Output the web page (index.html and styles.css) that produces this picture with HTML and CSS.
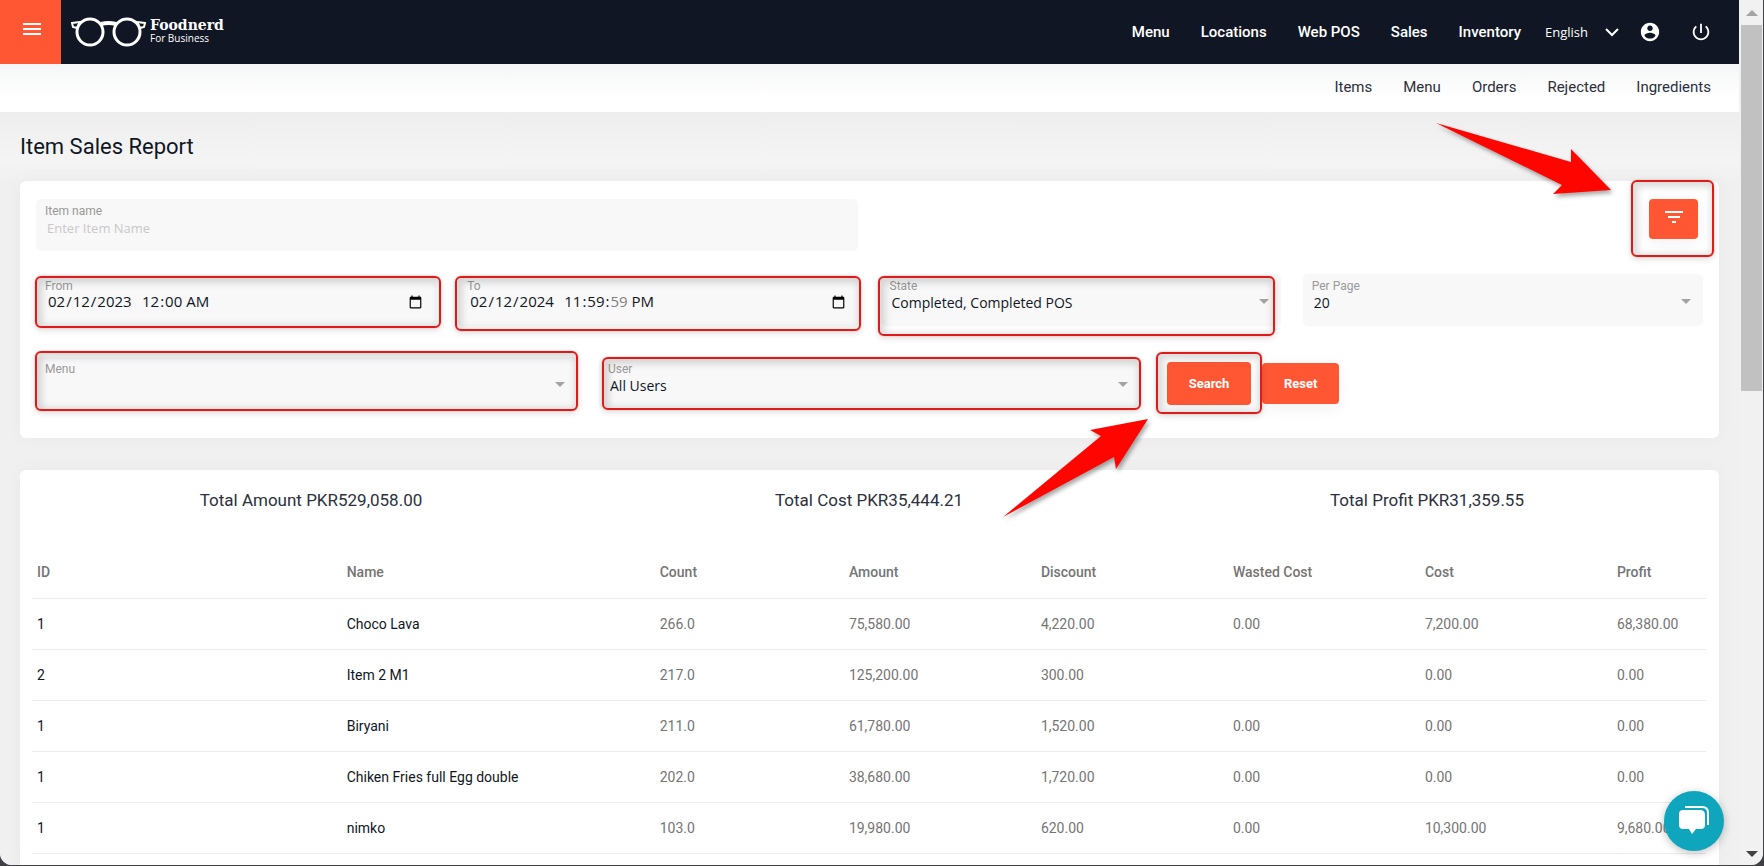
FILE: index.html
```html
<!DOCTYPE html>
<html lang="en">
<head>
    <meta charset="UTF-8">
    <meta name="viewport" content="width=device-width, initial-scale=1.0">
    <title>Item Sales Report</title>
    <link rel="stylesheet" href="styles.css">
</head>
<body>
    <div class="window">
        <div class="page">
            <header class="topbar">
                <button type="button" class="menu-toggle" aria-label="Toggle menu">
                    <svg width="20" height="14" viewBox="0 0 20 14"><path d="M1 2h18M1 7h18M1 12h18" stroke="#fff" stroke-width="2"/></svg>
                </button>
                <a href="#" class="logo">
                    <svg width="76" height="30" viewBox="0 0 76 30" fill="none" stroke="#fff">
                        <circle cx="19" cy="15" r="13" stroke-width="3"/>
                        <circle cx="56" cy="15" r="13" stroke-width="3"/>
                        <path d="M30 7c4-1 11-1 15 0" stroke-width="4"/>
                        <path d="M1 6l8-1-3 6-4-1zM74 6l-8-1 3 6 4-1z" stroke-width="2"/>
                    </svg>
                    <span class="logo-text">
                        <span class="logo-name">Foodnerd</span>
                        <span class="logo-sub">For Business</span>
                    </span>
                </a>
                <nav class="main-nav">
                    <a href="#">Menu</a>
                    <a href="#">Locations</a>
                    <a href="#">Web POS</a>
                    <a href="#">Sales</a>
                    <a href="#">Inventory</a>
                </nav>
                <div class="language">
                    <select aria-label="Language">
                        <option>English</option>
                    </select>
                    <svg width="14" height="9" viewBox="0 0 14 9"><path d="M1 1l6 6 6-6" fill="none" stroke="#fff" stroke-width="2"/></svg>
                </div>
                <a href="#" class="icon-link" aria-label="Account">
                    <svg width="22" height="22" viewBox="0 0 24 24" fill="#fff"><path d="M12 2C6.480 2 2 6.480 2 12s4.480 10 10 10 10-4.480 10-10S17.520 2 12 2zm0 3c1.660 0 3 1.340 3 3s-1.340 3-3 3-3-1.340-3-3 1.340-3 3-3zm0 14.200c-2.500 0-4.710-1.280-6-3.220.03-1.990 4-3.080 6-3.080 1.990 0 5.970 1.090 6 3.080-1.290 1.940-3.500 3.220-6 3.220z"/></svg>
                </a>
                <a href="#" class="icon-link" aria-label="Log out">
                    <svg width="22" height="22" viewBox="0 0 24 24" fill="#fff"><path d="M13 3h-2v10h2V3zm4.830 2.170l-1.420 1.420C17.990 7.860 19 9.810 19 12c0 3.870-3.130 7-7 7s-7-3.130-7-7c0-2.190 1.010-4.140 2.580-5.420L6.170 5.170C4.230 6.820 3 9.260 3 12c0 4.970 4.030 9 9 9s9-4.030 9-9c0-2.740-1.230-5.180-3.170-6.830z"/></svg>
                </a>
            </header>

            <nav class="sub-nav">
                <a href="#">Items</a>
                <a href="#">Menu</a>
                <a href="#">Orders</a>
                <a href="#">Rejected</a>
                <a href="#">Ingredients</a>
            </nav>

            <main class="content">
                <h1>Item Sales Report</h1>

                <form class="card filters">
                    <div class="row row-name">
                        <div class="field">
                            <label for="itemName">Item name</label>
                            <input type="text" id="itemName" placeholder="Enter Item Name">
                        </div>
                        <div class="marked filter-toggle">
                            <button type="button" class="btn btn-icon" aria-label="Filters">
                                <svg width="18" height="12" viewBox="0 0 18 12" fill="#fff"><path d="M0 0h18v2H0zM3 5h12v2H3zM7 10h4v2H7z"/></svg>
                            </button>
                            <span class="mark mark-filter"></span>
                            <svg class="arrow arrow-filter" width="176" height="72" viewBox="0 0 176 72"><path d="M0 0L135 39V26L175 67 117 71 126 62z"/></svg>
                        </div>
                    </div>

                    <div class="row row-dates">
                        <div class="field">
                            <label for="fromDate">From</label>
                            <div class="datetime">
                                <input type="date" id="fromDate" value="2023-02-12">
                                <input type="time" value="00:00" aria-label="From time">
                            </div>
                            <span class="mark mark-from"></span>
                        </div>
                        <div class="field">
                            <label for="toDate">To</label>
                            <div class="datetime">
                                <input type="date" id="toDate" value="2024-02-12">
                                <input type="time" value="23:59:59" aria-label="To time">
                            </div>
                            <span class="mark mark-to"></span>
                        </div>
                        <div class="field select">
                            <label for="state">State</label>
                            <select id="state">
                                <option>Completed, Completed POS</option>
                            </select>
                            <span class="mark mark-state"></span>
                        </div>
                        <div class="field select">
                            <label for="perPage">Per Page</label>
                            <select id="perPage">
                                <option>20</option>
                            </select>
                        </div>
                    </div>

                    <div class="row row-users">
                        <div class="field select">
                            <label for="menu">Menu</label>
                            <select id="menu">
                                <option></option>
                            </select>
                            <span class="mark mark-menu"></span>
                        </div>
                        <div class="field select">
                            <label for="user">User</label>
                            <select id="user">
                                <option>All Users</option>
                            </select>
                            <span class="mark mark-user"></span>
                        </div>
                        <div class="actions">
                            <div class="marked">
                                <button type="button" class="btn btn-search">Search</button>
                                <span class="mark mark-search"></span>
                                <svg class="arrow arrow-search" width="146" height="98" viewBox="0 0 146 98"><path d="M0 98L98 17 87 11 145 0 113 50 111 38z"/></svg>
                            </div>
                            <button type="reset" class="btn">Reset</button>
                        </div>
                    </div>
                </form>

                <section class="card report">
                    <div class="totals">
                        <p>Total Amount PKR529,058.00</p>
                        <p>Total Cost PKR35,444.21</p>
                        <p>Total Profit PKR31,359.55</p>
                    </div>
                    <table>
                        <colgroup>
                            <col class="col-id">
                            <col class="col-name">
                            <col class="col-count">
                            <col class="col-money">
                            <col class="col-money">
                            <col class="col-money">
                            <col class="col-money">
                            <col>
                        </colgroup>
                        <thead>
                            <tr><th>ID</th><th>Name</th><th>Count</th><th>Amount</th><th>Discount</th><th>Wasted Cost</th><th>Cost</th><th>Profit</th></tr>
                        </thead>
                        <tbody>
                            <tr><td>1</td><td>Choco Lava</td><td>266.0</td><td>75,580.00</td><td>4,220.00</td><td>0.00</td><td>7,200.00</td><td>68,380.00</td></tr>
                            <tr><td>2</td><td>Item 2 M1</td><td>217.0</td><td>125,200.00</td><td>300.00</td><td></td><td>0.00</td><td>0.00</td></tr>
                            <tr><td>1</td><td>Biryani</td><td>211.0</td><td>61,780.00</td><td>1,520.00</td><td>0.00</td><td>0.00</td><td>0.00</td></tr>
                            <tr><td>1</td><td>Chiken Fries full Egg double</td><td>202.0</td><td>38,680.00</td><td>1,720.00</td><td>0.00</td><td>0.00</td><td>0.00</td></tr>
                            <tr><td>1</td><td>nimko</td><td>103.0</td><td>19,980.00</td><td>620.00</td><td>0.00</td><td>10,300.00</td><td>9,680.00</td></tr>
                        </tbody>
                    </table>
                </section>
            </main>
        </div>

        <div class="scrollbar">
            <span class="scroll-up"></span>
            <span class="scroll-thumb"></span>
            <span class="scroll-down"></span>
        </div>

        <button type="button" class="chat" aria-label="Open chat">
            <svg width="32" height="32" viewBox="0 0 32 32">
                <path d="M7 2h17q6 0 6 6v12" fill="none" stroke="#fff" stroke-width="2"/>
                <path d="M5 5h17q5 0 5 5v10q0 4-4 4h-5l-4 5-3-5H5q-4 0-4-4V9q0-4 4-4z" fill="#fff"/>
            </svg>
        </button>
    </div>
</body>
</html>
```
FILE: styles.css
```css
* {
    box-sizing: border-box;
}
body {
    margin: 0;
    background-color: #3f4045;
    color: #101624;
    font-family: Roboto, "Liberation Sans", sans-serif;
}
a {
    color: inherit;
    text-decoration: none;
}
button {
    border: none;
    cursor: pointer;
}
.window {
    position: relative;
    display: flex;
    height: calc(100vh - 1px);
    margin-right: 1px;
    overflow: hidden;
    background-color: #f0f0f0;
    border-radius: 0 0 12px 12px;
}
.page {
    flex: 1;
    display: flex;
    flex-direction: column;
    min-width: 0;
}

/* header */
.topbar {
    display: flex;
    align-items: center;
    height: 64px;
    padding-right: 27px;
    flex-shrink: 0;
    background-color: #101624;
    color: #fff;
}
.menu-toggle {
    display: flex;
    justify-content: center;
    align-items: center;
    width: 61px;
    height: 64px;
    padding: 0 0 6px 2px;
    background-color: #ff5733;
}
.logo {
    display: flex;
    align-items: center;
    gap: 3px;
    margin-left: 10px;
    margin-right: auto;
}
.logo-text {
    display: flex;
    flex-direction: column;
    padding-bottom: 2px;
}
.logo-name {
    font: bold 14px/14px "DejaVu Serif", serif;
}
.logo-sub {
    font: 10px/12px "Open Sans", sans-serif;
}
.main-nav {
    display: flex;
    gap: 31px;
    font-size: 15px;
    font-weight: 500;
}
.language {
    display: flex;
    align-items: center;
    margin-left: 24px;
}
.language select {
    width: 60px;
    padding: 0;
    appearance: none;
    border: none;
    background: none;
    color: #fff;
    font: 13px "Open Sans", sans-serif;
}
.icon-link {
    display: flex;
    margin-left: 20px;
}
.icon-link + .icon-link {
    margin-left: 29px;
}
.sub-nav {
    display: flex;
    justify-content: flex-end;
    align-items: center;
    gap: 31px;
    height: 48px;
    padding: 0 28px 2px 0;
    flex-shrink: 0;
    background: linear-gradient(#f5f6f7, #fff 70%);
    color: #2b303c;
    font-size: 15px;
}

/* content */
.content {
    flex: 1;
    display: flex;
    flex-direction: column;
    padding: 21px 20px 0;
    background: linear-gradient(#eeeeee, #f4f4f4 48px, #f0f0f0 70px);
}
h1 {
    margin: 0 0 20px;
    font-size: 22px;
    line-height: 28px;
    font-weight: 400;
}
.card {
    background-color: #fff;
    border-radius: 6px;
    box-shadow: 0 0 20px rgba(0, 0, 0, 0.03);
}
.filters {
    padding: 18px 16px 29px;
    margin-bottom: 32px;
}
.row {
    display: grid;
    column-gap: 22px;
}
.row-name {
    grid-template-columns: 822px 1fr;
    margin-bottom: 23px;
}
.row-dates {
    grid-template-columns: repeat(4, 1fr);
    margin-bottom: 31px;
}
.row-users {
    grid-template-columns: repeat(3, 1fr);
}
.field {
    position: relative;
    display: flex;
    flex-direction: column;
    height: 52px;
    padding: 6px 9px 0;
    background-color: #f8f8f8;
    border-radius: 5px;
}
.field label {
    color: #999;
    font-size: 12px;
    line-height: 13px;
}
.field input,
.field select {
    height: 20px;
    padding: 0 2px;
    appearance: none;
    border: none;
    outline: none;
    background: none;
    color: #101624;
    font: 14px/20px "Open Sans", sans-serif;
}
.field input[type="text"] {
    font-size: 13px;
}
.field input::placeholder {
    color: #c8c8c8;
}
.datetime {
    position: relative;
    display: flex;
    align-items: center;
    height: 16px;
}
.field .datetime input {
    font-size: 15px;
}
.datetime input[type="date"] {
    width: 94px;
}

.datetime input[type="date"]::-webkit-calendar-picker-indicator {
    position: absolute;
    top: 0;
    right: 2px;
    margin: 0;
}
.datetime input[type="time"]::-webkit-calendar-picker-indicator {
    display: none;
}
.select::after {
    content: "";
    position: absolute;
    top: 25px;
    right: 12px;
    border: 5px solid transparent;
    border-top-color: #a3a3a3;
    border-bottom: none;
}

/* buttons */
.btn {
    height: 41px;
    padding: 0 22px;
    background-color: #ff5733;
    border-radius: 4px;
    box-shadow: 0 4px 16px rgba(0, 0, 0, 0.06);
    color: #fff;
    font: bold 13px Roboto, sans-serif;
}
.btn-search {
    height: 43px;
    width: 84px;
    padding: 0;
}
.btn-icon {
    display: flex;
    justify-content: center;
    align-items: center;
    width: 49px;
    height: 40px;
    padding: 0 0 4px;
}
.actions {
    display: flex;
    align-items: center;
    gap: 11px;
    padding-left: 5px;
}
.marked {
    position: relative;
}
.filter-toggle {
    justify-self: end;
    align-self: start;
    margin-right: 5px;
}

/* highlight boxes and arrows drawn over the form */
.mark {
    position: absolute;
    z-index: 1;
    border: 2px solid #dd1c1a;
    border-radius: 6px;
    box-shadow: 0 0 1px #f66, 0 2px 6px rgba(0, 0, 0, 0.15), inset 2px 2px 7px 3px rgba(0, 0, 0, 0.14);
    pointer-events: none;
}
.mark-from {
    inset: 2px -5px -2px -1px;
}
.mark-to {
    inset: 2px -2px -5px -3px;
}
.mark-state {
    inset: 2px 6px -10px -3px;
}
.mark-menu {
    inset: -6px -1px -2px -1px;
}
.mark-user {
    inset: 0 -1px -1px 3px;
}
.mark-search {
    inset: -10px -11px -9px;
}
.mark-filter {
    inset: -19px -16px -18px -18px;
}
.arrow {
    position: absolute;
    z-index: 2;
    overflow: visible;
    fill: #ff0500;
    filter: drop-shadow(2px 3px 2px rgba(0, 0, 0, 0.35));
    pointer-events: none;
}
.arrow-filter {
    top: -76px;
    right: 86px;
}
.arrow-search {
    top: 57px;
    right: 102px;
}

/* report */
.report {
    flex: 1;
    padding: 0 13px 0 12px;
    border-radius: 6px 6px 0 0;
}
.totals {
    display: grid;
    grid-template-columns: repeat(3, 1fr);
    padding: 20px 0 37px;
    color: #2b303c;
    font-size: 17px;
    line-height: 20px;
    text-align: center;
}
.totals p {
    margin: 0;
}
table {
    width: 100%;
    table-layout: fixed;
    border-collapse: collapse;
    font-size: 14px;
}
.col-id {
    width: 18.5%;
}
.col-name {
    width: 18.7%;
}
.col-count {
    width: 11.3%;
}
.col-money {
    width: 11.47%;
}
th,
td {
    height: 51px;
    padding: 0 5px;
    border-bottom: 1px solid #ececec;
    color: #757575;
    text-align: left;
    white-space: nowrap;
}
th {
    font-weight: 500;
}
td:nth-child(-n+2) {
    color: #101624;
}

/* scrollbar */
.scrollbar {
    display: flex;
    flex-direction: column;
    align-items: center;
    width: 24px;
    padding: 10px 1px 8px 2px;
    background-color: #f1f1f1;
}
.scroll-up,
.scroll-down {
    border: 6px solid transparent;
}
.scroll-up {
    border-top: none;
    border-bottom-color: #a3a3a3;
}
.scroll-down {
    margin-top: auto;
    border-bottom: none;
    border-top-color: #404040;
}
.scroll-thumb {
    width: 100%;
    height: 366px;
    margin-top: 9px;
    background-color: #c1c1c1;
}

.chat {
    position: absolute;
    right: 39px;
    bottom: 14px;
    z-index: 3;
    display: flex;
    justify-content: center;
    align-items: center;
    width: 60px;
    height: 60px;
    border-radius: 50%;
    background-color: #0fa5bd;
    box-shadow: 0 2px 8px rgba(0, 0, 0, 0.25);
}
```
